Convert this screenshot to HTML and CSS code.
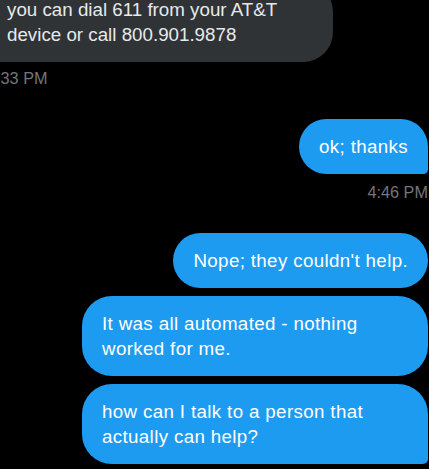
FILE: index.html
```html
<!DOCTYPE html>
<html lang="en">
<head>
<meta charset="utf-8">
<title>Messages</title>
<link rel="stylesheet" href="styles.css">
</head>
<body>
<main class="chat">
  <section class="group group-received">
    <div class="bubble bubble-received bubble-last">you can dial 611 from your AT&amp;T device or call 800.901.9878</div>
    <div class="time">4:33 PM</div>
  </section>
  <section class="group group-sent group-ok">
    <div class="bubble bubble-sent bubble-last">ok; thanks</div>
    <div class="time">4:46 PM</div>
  </section>
  <section class="group group-sent group-last">
    <div class="bubble bubble-sent">Nope; they couldn't help.</div>
    <div class="bubble bubble-sent">It was all automated - nothing worked for me.</div>
    <div class="bubble bubble-sent bubble-last">how can I talk to a person that actually can help?</div>
  </section>
</main>
</body>
</html>
```

FILE: styles.css
```css
* { box-sizing: border-box; }

html, body {
  margin: 0;
  padding: 0;
  background: #000;
  overflow: hidden;
}

body {
  font-family: "Liberation Sans", Arial, sans-serif;
  color: #e7e9ea;
}

.chat {
  display: flex;
  flex-direction: column;
  padding-right: 1px;
}

.group {
  display: flex;
  flex-direction: column;
  gap: 8px;
}

.group-received {
  align-items: flex-start;
  margin-left: -13px;
  margin-top: -18px;
  gap: 6px;
}

.group-sent {
  align-items: flex-end;
}

.group-ok {
  margin-top: 31px;
}

.group-last {
  margin-top: 31px;
}

.bubble {
  max-width: 346px;
  padding: 15px 20px;
  font-size: 18.75px;
  line-height: 25px;
  border-radius: 30px;
}

.bubble-received {
  background: #2f3336;
  color: #e7e9ea;
}

.bubble-received.bubble-last {
  border-bottom-left-radius: 5px;
}

.bubble-sent {
  background: #1d9bf0;
  color: #fff;
  letter-spacing: 0.35px;
}

.bubble-sent.bubble-last {
  border-bottom-right-radius: 5px;
}

.time {
  font-size: 16.25px;
  line-height: 20px;
  color: #71767b;
}
```
